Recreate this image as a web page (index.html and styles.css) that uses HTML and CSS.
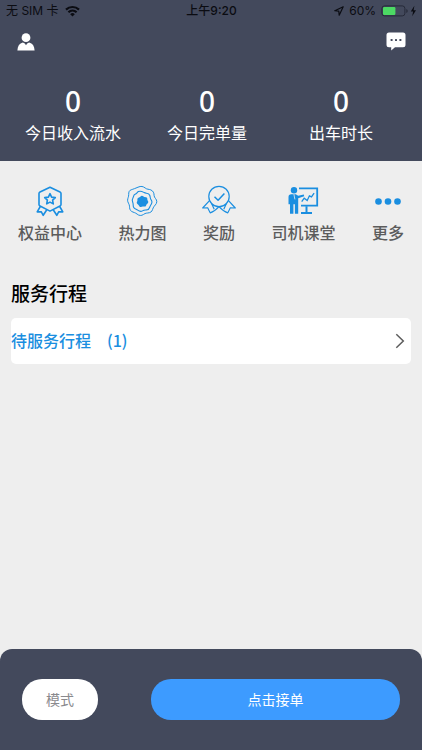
FILE: index.html
```html
<!DOCTYPE html>
<html lang="zh-CN">
<head>
<meta charset="utf-8">
<meta name="viewport" content="width=device-width, initial-scale=1">
<title>服务行程</title>
<link rel="stylesheet" href="styles.css">
</head>
<body>
<header class="top">
  <div class="status">
    <div class="status-side">
      <span>无 SIM 卡</span>
      <svg width="15" height="12" viewBox="0 0 15 12" fill="none" stroke="#0b0c12" stroke-width="2.2"><path d="M1 4.6a9.4 9.4 0 0 1 13 0M3.400 7.200a6 6 0 0 1 8.200 0"/><path d="M7.500 11.600 5.200 9.200a3.300 3.300 0 0 1 4.600 0z" fill="#0b0c12" stroke="none"/></svg>
    </div>
    <span class="clock">上午9:20</span>
    <div class="status-side status-right">
      <svg width="10" height="10" viewBox="0 0 10 10" fill="none" stroke="#0b0c12" stroke-width="1.200" stroke-linejoin="round"><path d="M9.200.8.8 4.700l4 .5.4 4z"/></svg>
      <span>60%</span>
      <svg width="36" height="12" viewBox="0 0 36 12"><rect x=".9" y=".9" width="23" height="10" rx="2.600" fill="none" stroke="#262a38"/><rect x="2" y="2" width="12.400" height="8" rx="1.200" fill="#4cd964"/><path d="M25.300 4v4q1.400-.5 1.400-2t-1.400-2z" fill="#262a38"/><path d="M33.400.8 29.800 6.600h2.300l-.9 4.600 3.800-5.900h-2.400z" fill="#0b0c12"/></svg>
    </div>
  </div>
  <div class="bar">
    <button class="icon-button" aria-label="个人中心">
      <svg width="18" height="18" viewBox="0 0 18 18" fill="#fff"><circle cx="9" cy="4.700" r="4.400"/><path d="M.4 17.400c.2-4.400 2-7.100 5.500-7.900l1.900 1.100L9 12.200l1.200-1.600 1.900-1.100c3.500.8 5.300 3.500 5.500 7.900z"/></svg>
    </button>
    <button class="icon-button" aria-label="消息">
      <svg width="20" height="19" viewBox="0 0 20 19"><path d="M3 .5h14q2.500 0 2.500 2.500v9.700q0 2.500-2.500 2.500H9L5.200 18.400v-3.200H3Q.5 15.200.5 12.700V3Q.5.500 3 .500z" fill="#fff"/><g fill="#43495c"><rect x="4.600" y="7" width="2" height="2" rx=".6"/><rect x="9" y="7" width="2" height="2" rx=".6"/><rect x="13.400" y="7" width="2" height="2" rx=".6"/></g></svg>
    </button>
  </div>
  <dl class="stats">
    <div class="stat"><dt>今日收入流水</dt><dd>0</dd></div>
    <div class="stat"><dt>今日完单量</dt><dd>0</dd></div>
    <div class="stat"><dt>出车时长</dt><dd>0</dd></div>
  </dl>
</header>
<main class="content">
  <nav class="shortcuts">
    <a class="shortcut" href="#benefits">
      <svg width="32" height="32" viewBox="0 0 32 32" fill="none" stroke="#1a8ee0" stroke-width="1.600" stroke-linejoin="round"><path d="M16 2.200 26 7q1 .5 1 1.500v11q0 1-1 1.500L16 26.100 6 21Q5 20.500 5 19.500v-11Q5 7.500 6 7z"/><path d="m16 8.700 1.600 3.400 3.700.5-2.700 2.600.7 3.700-3.300-1.800-3.300 1.800.7-3.700-2.700-2.600 3.700-.5z"/><path d="m6.300 21.500-3.100 5.400 4-.2 2 3.600 3.600-5.500M25.700 21.500l3.100 5.400-4-.2-2 3.600-3.600-5.500"/></svg>
      <span>权益中心</span>
    </a>
    <a class="shortcut" href="#heatmap">
      <svg width="32" height="32" viewBox="0 0 32 32" fill="none" stroke="#1a8ee0" stroke-linejoin="round"><path d="M12 2.200c3-1.400 5.200-.8 7.200.8s3.500 1 5.600 1.900c2.500 1.100 3.300 3.200 3.300 5.600s2.800 3.500 2.700 6.200-2.600 3.800-3.600 6.200-1.300 4.200-3.800 4.800-3.700.1-5.800 1.700-4.700 1.300-6.500-.3-3.700-1.600-5.500-2.700-2-3-2.100-5.200-2-3.800-1.900-6 1.100-3.200 1.100-5.600.2-4 2.500-4.800S9 3.500 12 2.200z" stroke-width="1"/><path d="M12.400 6.600c2.200-1.200 4 0 5.800 1s4.600.3 5.500 2.600.1 3.100 1.600 4.900.3 3.800-.8 5.400-1 3.900-3.100 4.300-3.200.1-4.900 1.100-3.500.2-4.800-.8-3.300-1-4.100-2.800 0-2.900-.9-5-.7-3 .3-4.600.3-2.800 2.100-3.400 1.800-1.900 3.300-2.700z" stroke-width="1.100"/><path d="M15.100 11q.8-.6 1.700 0l1.500.9 1.900.3q1 .3 1.100 1.200l.1 1.700.8 1.500q.4.900-.4 1.600l-1.300 1.200-.6 1.500q-.5.800-1.400.7l-1.800-.2-1.700.5q-.9.200-1.500-.5l-1-1.500-1.300-1.100q-.7-.7-.4-1.600l.6-1.500v-1.800q.1-.9 1-1.200l1.600-.6z" fill="#1a8ee0" stroke="none"/></svg>
      <span>热力图</span>
    </a>
    <a class="shortcut" href="#rewards">
      <svg class="wide" width="36" height="32" viewBox="0 0 36 32" fill="none" stroke="#1a8ee0" stroke-width="1.200" stroke-linejoin="round"><circle cx="18" cy="11.500" r="10.200"/><path d="m13.500 11.700 3.600 3.500 6.300-6.600" stroke-width="1.500"/><path d="m8.500 15.700-6.800 7.300 5.100-.1q.8 2 2.400 4.900 4.500-1.200 8.800-6.100 4.300 4.900 8.800 6.100 1.600-2.900 2.400-4.900l5.100.1-6.800-7.300M10.600 18.600l2.600 5.600M25.400 18.600l-2.600 5.600"/></svg>
      <span>奖励</span>
    </a>
    <a class="shortcut" href="#classroom">
      <svg width="32" height="32" viewBox="0 0 32 32" fill="none" stroke="#1a8ee0"><circle cx="7" cy="5.300" r="3.200" fill="#1a8ee0" stroke="none"/><path d="M1.500 12q0-2.800 2.700-2.800h4.600l2.400 1.500 5.600-1.300.4 1.900-6 1.900v15.600H7.900v-9.500H6.400v9.500H3v-9.500H1.500z" fill="#1a8ee0" stroke="none"/><path d="m6.900 9.200 1 5.200" stroke="#eee" stroke-width=".8"/><path d="M12 3.400h18.200v17.200H14" stroke-width="1.800"/><path d="m14.700 16.700 2.500-3.500 3 2.300 2.200-4.700 2.100 1.100 2.600-3.700" stroke-width="1.300"/><path d="M19.500 21.300v6M14 28h11" stroke-width="2"/></svg>
      <span>司机课堂</span>
    </a>
    <a class="shortcut" href="#more">
      <svg width="32" height="32" viewBox="0 0 32 32" fill="#1a8ee0"><circle cx="6.500" cy="16.500" r="3.300"/><circle cx="16" cy="16.500" r="3.300"/><circle cx="25.500" cy="16.500" r="3.300"/></svg>
      <span>更多</span>
    </a>
  </nav>
  <section class="trips">
    <h1>服务行程</h1>
    <a class="trip" href="#pending">
      <span class="trip-label">待服务行程 <span>(1)</span></span>
      <svg width="10" height="16" viewBox="0 0 10 16" fill="none" stroke="#5c5c5c" stroke-width="1.500"><path d="m1.300 1.200 7 6.800-7 6.800"/></svg>
    </a>
  </section>
</main>
<footer class="dock">
  <button class="pill mode">模式</button>
  <button class="pill accept">点击接单</button>
</footer>
</body>
</html>
```
FILE: styles.css
```css
* {
  box-sizing: border-box;
}

body {
  margin: 0;
  min-height: 100vh;
  display: flex;
  flex-direction: column;
  background: #eee;
  font-family: "Noto Sans CJK SC", sans-serif;
}

button {
  padding: 0;
  border: 0;
  font: inherit;
  cursor: pointer;
}

a {
  text-decoration: none;
}

svg {
  display: block;
  flex: none;
}

.top {
  padding-bottom: 17px;
  background: #43495c;
  color: #fff;
}

.status {
  display: flex;
  align-items: center;
  padding: 2px 5px 0 6px;
  color: #0b0c12;
  font-family: Inter, "Noto Sans CJK SC", sans-serif;
  font-size: 12px;
  line-height: 18px;
}

.status-side {
  flex: 1;
  display: flex;
  align-items: center;
  gap: 6px;
}

.status-right {
  justify-content: flex-end;
  gap: 5px;
}

.clock {
  font-weight: 500;
}

.bar {
  display: flex;
  justify-content: space-between;
  padding: 12px 16px 0 17px;
}

.icon-button {
  background: none;
}

.stats {
  display: grid;
  grid-template-columns: repeat(3, 1fr);
  margin: 0;
  padding: 31px 14px 0 6px;
  text-align: center;
}

.stat {
  display: flex;
  flex-direction: column-reverse;
}

.stat dt {
  font-size: 16px;
  line-height: 24px;
}

.stat dd {
  margin: 0;
  font-family: "Noto Sans", "Noto Sans CJK SC", sans-serif;
  font-size: 28px;
  font-weight: 500;
  line-height: 38px;
}

.content {
  flex: 1;
}

.shortcuts {
  display: flex;
  justify-content: space-between;
  padding: 24px 18px 0;
}

.shortcut {
  display: flex;
  flex-direction: column;
  align-items: center;
  gap: 3px;
  color: #5c5c5c;
  font-size: 16px;
  font-weight: 500;
  line-height: 24px;
}

.wide {
  margin: 0 -2px;
}

.trips {
  padding: 33px 11px 0;
}

.trips h1 {
  margin: 0 0 9px;
  font-size: 19px;
  font-weight: 500;
  line-height: 32px;
}

.trip {
  display: flex;
  align-items: center;
  justify-content: space-between;
  min-height: 46px;
  padding-right: 6px;
  border-radius: 5px;
  background: #fff;
  color: #1a8ee0;
  font-size: 16px;
  font-weight: 500;
}

.trip-label {
  display: flex;
  gap: 16px;
  padding-bottom: 2px;
}

.dock {
  display: flex;
  gap: 53px;
  padding: 30px 22px;
  border-radius: 12px 12px 0 0;
  background: #43495c;
}

.pill {
  height: 41px;
  padding-bottom: 2px;
  border-radius: 20px;
  font-size: 14px;
}

.mode {
  width: 76px;
  background: #fff;
  color: #8a8a8e;
}

.accept {
  flex: 1;
  background: #3d9bff;
  color: #fff;
}
```
